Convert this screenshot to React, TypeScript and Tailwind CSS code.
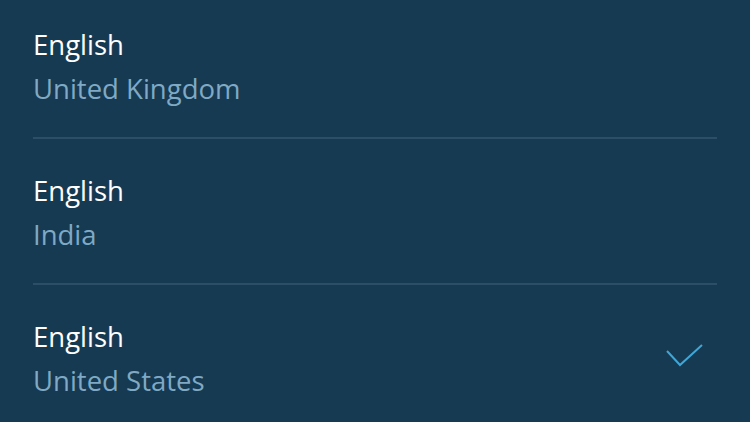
const rows = [
  { lang: "English", region: "United Kingdom", selected: false },
  { lang: "English", region: "India", selected: false },
  { lang: "English", region: "United States", selected: true },
]

export default function App() {
  return (
    <div
      className="w-[750px] h-[422px] overflow-hidden bg-[#163a52] pt-[23px] px-[33px]"
      style={{ fontFamily: '"Open Sans", "Noto Sans", sans-serif' }}
    >
      {rows.map((row, i) => (
        <div key={i}>
          {i > 0 && <div className="h-[2px] bg-[#2c4e67] mt-[26px] mb-[30px]" />}
          <div className="flex items-center justify-between">
            <div className="flex flex-col">
              <span className="text-white text-[27.5px] leading-[44px]">{row.lang}</span>
              <span className="text-[#7fa9c4] text-[27.5px] leading-[44px]">{row.region}</span>
            </div>
            {row.selected && (
              <svg width="40" height="28" viewBox="0 0 40 28" className="mr-[12px] mb-[4px]" fill="none">
                <path d="M2 8 L15 22 L37 2" stroke="#3fa6d6" strokeWidth="2" />
              </svg>
            )}
          </div>
        </div>
      ))}
    </div>
  )
}
